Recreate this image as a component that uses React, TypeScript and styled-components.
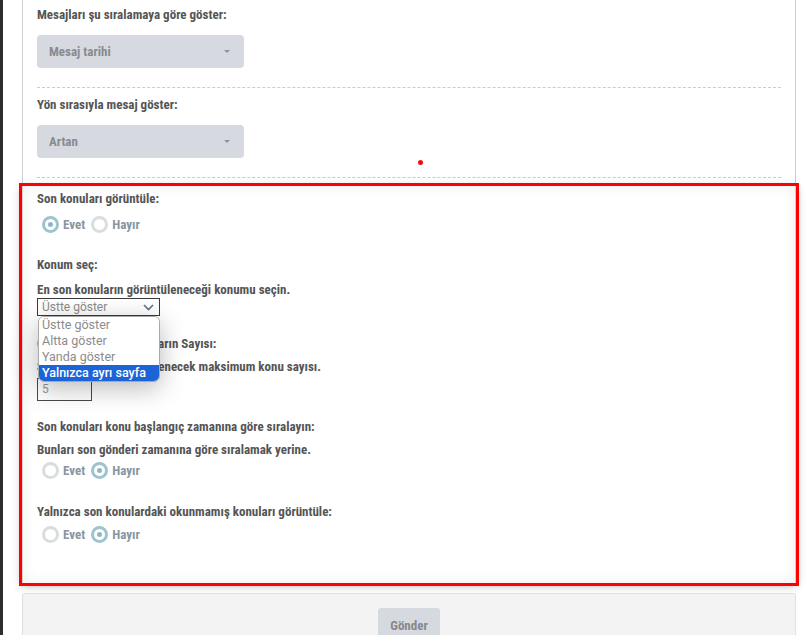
import React from 'react';
import styled, { createGlobalStyle } from 'styled-components';

const GlobalStyle = createGlobalStyle`
  html, body {
    margin: 0;
    padding: 0;
    background: #fff;
  }
  body {
    font-family: Roboto, "Liberation Sans", sans-serif;
  }
  * {
    box-sizing: border-box;
  }
`;

const narrow = `"Roboto Condensed", "Liberation Sans Narrow", "DejaVu Sans Condensed", Roboto, sans-serif`;

const Page = styled.div`
  position: relative;
  min-height: 635px;
  border-left: 3px solid #2e2e2e;
  padding: 0 11px 0 19px;
  overflow: hidden;
`;

const Panel = styled.div`
  border-left: 1px solid #cfcfcf;
  border-right: 1px solid #cfcfcf;
  padding: 7px 14px 5px 14px;
`;

const Group = styled.div<{ $last?: boolean }>`
  padding: 0 0 19px;
  margin-bottom: ${({ $last }) => ($last ? '0' : '9px')};
  border-bottom: 1px dashed #cccccc;
`;

const Label = styled.div<{ $gap?: number }>`
  font-family: ${narrow};
  font-stretch: condensed;
  font-weight: 700;
  font-size: 13px;
  line-height: 16px;
  color: #555555;
  margin-bottom: ${({ $gap }) => ($gap ?? 0)}px;
`;

const FancySelect = styled.div`
  display: flex;
  align-items: center;
  justify-content: space-between;
  width: 207px;
  height: 33px;
  padding: 0 12px;
  border-radius: 4px;
  background: #d6d9df;
  font-family: ${narrow};
  font-stretch: condensed;
  font-weight: 700;
  font-size: 13px;
  color: #888b90;
`;

const Caret = styled.span`
  width: 0;
  height: 0;
  margin-right: 2px;
  border-left: 3px solid transparent;
  border-right: 3px solid transparent;
  border-top: 3px solid #8f9296;
`;

const Highlight = styled.div`
  outline: 3px solid #ff0000;
  border-left: 1px solid #cfcfcf;
  border-right: 1px solid #cfcfcf;
  box-shadow: 0 2px 9px rgba(0, 0, 0, 0.35), inset 0 0 14px rgba(0, 0, 0, 0.07);
  margin-top: 3px;
  padding: 5px 14px 20px 14px;
  height: 397px;
`;

const Field = styled.div<{ $top?: number }>`
  margin-top: ${({ $top }) => ($top ?? 0)}px;
`;

const RadioRow = styled.div`
  display: flex;
  align-items: center;
  gap: 4px;
  padding-left: 5px;
  height: 20px;
`;

const RadioOption = styled.label`
  display: flex;
  align-items: center;
  gap: 4px;
  margin-right: 2px;
  font-family: ${narrow};
  font-stretch: condensed;
  font-weight: 700;
  font-size: 13px;
  color: #8796a2;
`;

const RadioCircle = styled.span<{ $on: boolean }>`
  position: relative;
  width: 17px;
  height: 17px;
  border-radius: 50%;
  border: 3px solid ${({ $on }) => ($on ? '#9dc3ce' : '#dadddd')};
  background: #fff;

  &::after {
    content: '';
    display: ${({ $on }) => ($on ? 'block' : 'none')};
    position: absolute;
    left: 3px;
    top: 3px;
    width: 5px;
    height: 5px;
    border-radius: 50%;
    background: #8db7c4;
  }
`;

const SelectWrap = styled.div`
  position: relative;
  width: 123px;
`;

const NativeSelect = styled.div`
  display: flex;
  align-items: center;
  justify-content: space-between;
  height: 18px;
  padding: 0 5px 0 4px;
  border: 1px solid #3a3a3a;
  font-size: 12px;
  color: #8b8b8b;
`;

const OptionList = styled.ul`
  position: absolute;
  left: 1px;
  top: 18px;
  width: 122px;
  margin: 0;
  padding: 0;
  list-style: none;
  background: #fff;
  border: 1px solid #a9a9a9;
  border-radius: 6px;
  overflow: hidden;
  box-shadow: 0 6px 26px rgba(0, 0, 0, 0.28);
  z-index: 2;
`;

const OptionItem = styled.li<{ $active?: boolean }>`
  height: 16px;
  line-height: 16px;
  padding-left: 3px;
  font-size: 12.5px;
  background: ${({ $active }) => ($active ? '#1b63d6' : '#fff')};
  color: ${({ $active }) => ($active ? '#fff' : '#8c8c8c')};
  font-weight: ${({ $active }) => ($active ? 500 : 400)};
`;

const NumberBox = styled.div`
  width: 55px;
  height: 23px;
  margin-top: 3px;
  padding: 3px 4px;
  border: 1px solid #4a4a4a;
  font-size: 12px;
  color: #999;
`;

const Footer = styled.div`
  display: flex;
  justify-content: center;
  margin-top: 10px;
  height: 60px;
  padding-top: 14px;
  background: #f3f3f3;
  border: 1px solid #dbe2e6;
  border-radius: 2px;
`;

const SubmitButton = styled.button`
  height: 34px;
  padding: 0 12px;
  border: none;
  border-radius: 3px;
  background: #d6d9df;
  font-family: ${narrow};
  font-stretch: condensed;
  font-weight: 700;
  font-size: 13px;
  color: #85888c;
`;

const Pointer = styled.span`
  position: absolute;
  left: 415px;
  top: 160px;
  width: 5px;
  height: 5px;
  border-radius: 50%;
  background: #e11;
`;

const Chevron = () => (
  <svg width="11" height="7" viewBox="0 0 11 7">
    <path d="M1 1l4.5 4.5L10 1" fill="none" stroke="#5f7181" strokeWidth="1.6" />
  </svg>
);

interface RadioProps {
  value: 'yes' | 'no';
}

const YesNo: React.FC<RadioProps> = ({ value }) => (
  <RadioRow>
    <RadioOption>
      <RadioCircle $on={value === 'yes'} />
      Evet
    </RadioOption>
    <RadioOption>
      <RadioCircle $on={value === 'no'} />
      Hayır
    </RadioOption>
  </RadioRow>
);

const positions = ['Üstte göster', 'Altta göster', 'Yanda göster', 'Yalnızca ayrı sayfa'];

export default function App() {
  return (
    <>
      <GlobalStyle />
      <Page>
        <Panel>
          <Group>
            <Label $gap={12}>Mesajları şu sıralamaya göre göster:</Label>
            <FancySelect>
              Mesaj tarihi
              <Caret />
            </FancySelect>
          </Group>
          <Group $last>
            <Label $gap={12}>Yön sırasıyla mesaj göster:</Label>
            <FancySelect>
              Artan
              <Caret />
            </FancySelect>
          </Group>
        </Panel>

        <Highlight>
          <Field>
            <Label $gap={7}>Son konuları görüntüle:</Label>
            <YesNo value="yes" />
          </Field>

          <Field $top={23}>
            <Label $gap={9}>Konum seç:</Label>
            <Label>En son konuların görüntüleneceği konumu seçin.</Label>
            <SelectWrap>
              <NativeSelect>
                Üstte göster
                <Chevron />
              </NativeSelect>
              <OptionList>
                {positions.map((p, i) => (
                  <OptionItem key={p} $active={i === positions.length - 1}>
                    {p}
                  </OptionItem>
                ))}
              </OptionList>
            </SelectWrap>
          </Field>

          <Field $top={20}>
            <Label $gap={7}>Gösterilecek Son Konuların Sayısı:</Label>
            <Label>Son konularda görüntülenecek maksimum konu sayısı.</Label>
            <NumberBox>5</NumberBox>
          </Field>

          <Field $top={18}>
            <Label $gap={7}>Son konuları konu başlangıç zamanına göre sıralayın:</Label>
            <Label $gap={2}>Bunları son gönderi zamanına göre sıralamak yerine.</Label>
            <YesNo value="no" />
          </Field>

          <Field $top={24}>
            <Label $gap={4}>Yalnızca son konulardaki okunmamış konuları görüntüle:</Label>
            <YesNo value="no" />
          </Field>
        </Highlight>

        <Footer>
          <SubmitButton>Gönder</SubmitButton>
        </Footer>

        <Pointer />
      </Page>
    </>
  );
}
